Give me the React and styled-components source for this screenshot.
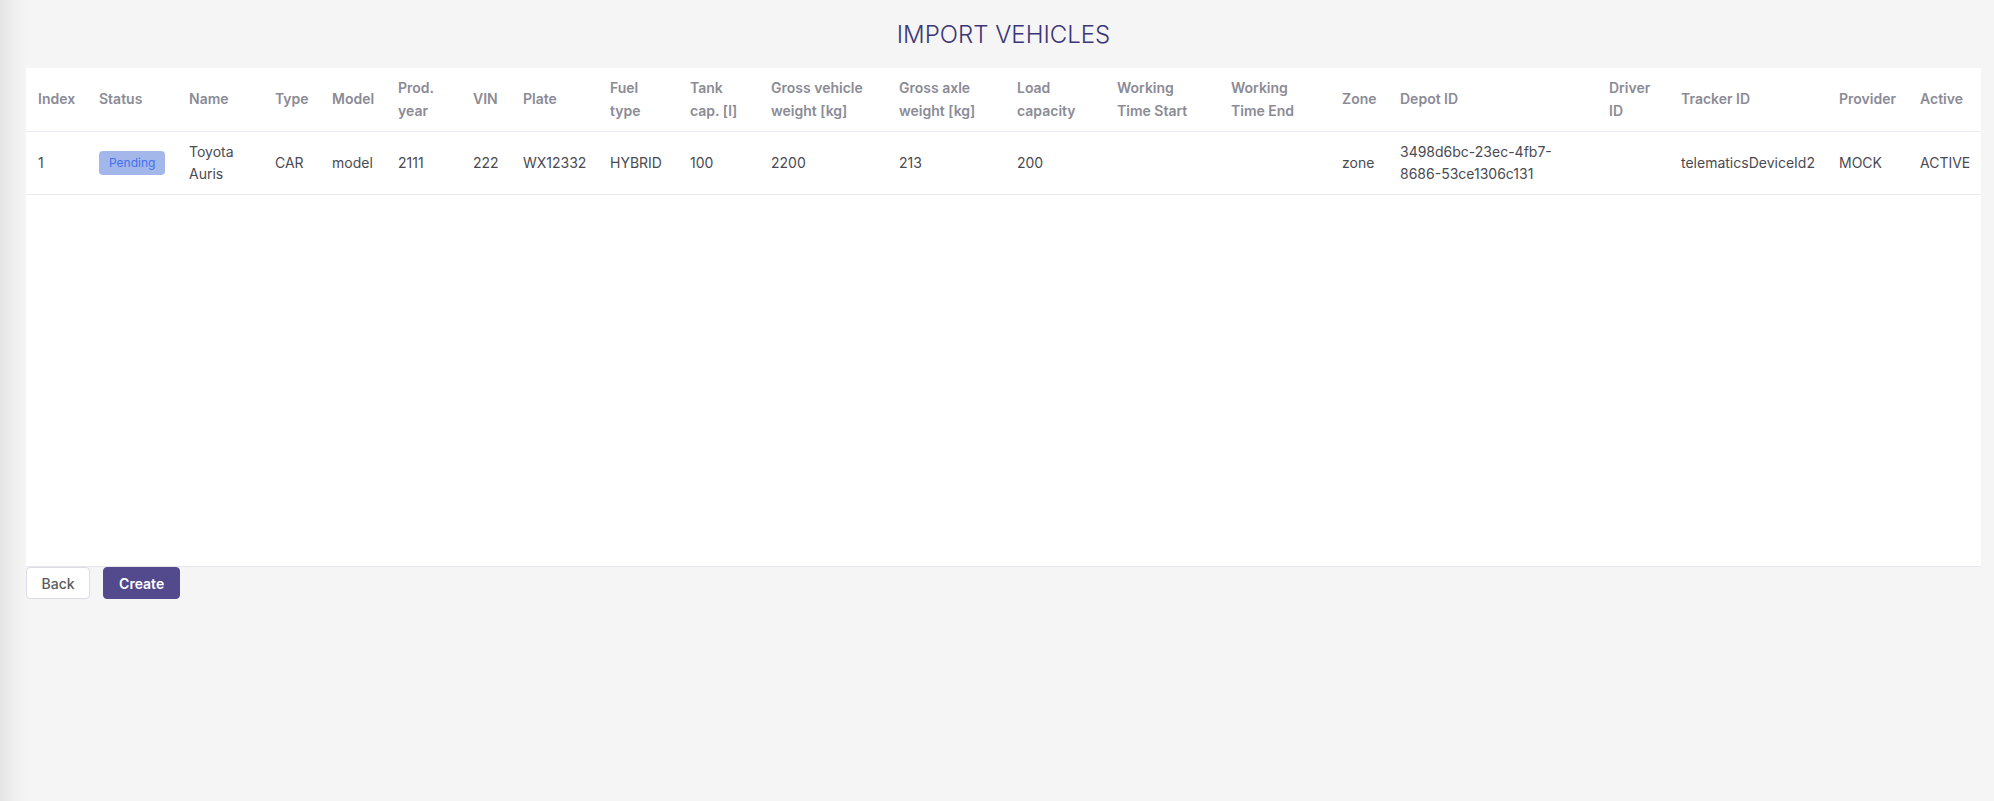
import React from 'react';
import styled, { createGlobalStyle } from 'styled-components';

const GlobalStyle = createGlobalStyle`
  html, body {
    margin: 0;
    padding: 0;
    background: #f5f5f5;
  }
  * {
    box-sizing: border-box;
  }
`;

const columns = [
  { key: 'index', title: 'Index', width: 61 },
  { key: 'status', title: 'Status', width: 90 },
  { key: 'name', title: 'Name', width: 86 },
  { key: 'type', title: 'Type', width: 57 },
  { key: 'model', title: 'Model', width: 66 },
  { key: 'prodYear', title: 'Prod. year', width: 75 },
  { key: 'vin', title: 'VIN', width: 50 },
  { key: 'plate', title: 'Plate', width: 87 },
  { key: 'fuelType', title: 'Fuel type', width: 80 },
  { key: 'tankCap', title: 'Tank cap. [l]', width: 81 },
  { key: 'grossVehicle', title: 'Gross vehicle weight [kg]', width: 128 },
  { key: 'grossAxle', title: 'Gross axle weight [kg]', width: 118 },
  { key: 'loadCapacity', title: 'Load capacity', width: 100 },
  { key: 'wtStart', title: 'Working Time Start', width: 114 },
  { key: 'wtEnd', title: 'Working Time End', width: 111 },
  { key: 'zone', title: 'Zone', width: 58 },
  { key: 'depotId', title: 'Depot ID', width: 209 },
  { key: 'driverId', title: 'Driver ID', width: 72 },
  { key: 'trackerId', title: 'Tracker ID', width: 158 },
  { key: 'provider', title: 'Provider', width: 81 },
  { key: 'active', title: 'Active', width: 73 },
];

const vehicles = [
  {
    index: 1,
    status: 'Pending',
    name: 'Toyota Auris',
    type: 'CAR',
    model: 'model',
    prodYear: '2111',
    vin: '222',
    plate: 'WX12332',
    fuelType: 'HYBRID',
    tankCap: '100',
    grossVehicle: '2200',
    grossAxle: '213',
    loadCapacity: '200',
    wtStart: '',
    wtEnd: '',
    zone: 'zone',
    depotId: '3498d6bc-23ec-4fb7-8686-53ce1306c131',
    driverId: '',
    trackerId: 'telematicsDeviceId2',
    provider: 'MOCK',
    active: 'ACTIVE',
  },
];

const App = () => {
  return (
    <Page>
      <GlobalStyle />
      <Title>IMPORT VEHICLES</Title>
      <Panel>
        <Table>
          <colgroup>
            {columns.map(col => (
              <col key={col.key} style={{ width: col.width }} />
            ))}
          </colgroup>
          <thead>
            <tr>
              {columns.map(col => (
                <HeadCell key={col.key}>{col.title}</HeadCell>
              ))}
            </tr>
          </thead>
          <tbody>
            {vehicles.map(vehicle => (
              <Row key={vehicle.index}>
                {columns.map(col => (
                  <Cell key={col.key}>
                    {col.key === 'status' ? (
                      <StatusBadge>{vehicle.status}</StatusBadge>
                    ) : (
                      vehicle[col.key]
                    )}
                  </Cell>
                ))}
              </Row>
            ))}
          </tbody>
        </Table>
      </Panel>
      <Actions>
        <Button>Back</Button>
        <Button primary>Create</Button>
      </Actions>
    </Page>
  );
};

export default App;

const Page = styled.div`
  min-height: 801px;
  padding: 0 13px 0 26px;
  font-family: Inter, 'Noto Sans', sans-serif;
  background: linear-gradient(to right, #e4e4e4 0, #efefef 14px, #f5f5f5 26px);
`;

const Title = styled.h1`
  margin: 0;
  height: 68px;
  display: flex;
  align-items: center;
  justify-content: center;
  padding-top: 1px;
  font-size: 24px;
  font-weight: 300;
  color: #3c3577;
`;

const Panel = styled.div`
  height: 499px;
  background: #fff;
  border-bottom: 1px solid #e6e6ee;
`;

const Table = styled.table`
  width: 100%;
  table-layout: fixed;
  border-collapse: collapse;
  font-size: 14px;
  line-height: 22.5px;
`;

const HeadCell = styled.th`
  padding: 9px 12px;
  text-align: left;
  vertical-align: middle;
  font-weight: 600;
  color: #8b8b96;
  border-bottom: 1px solid #ebebf2;
`;

const Row = styled.tr`
  border-bottom: 1px solid #ebebf2;
`;

const Cell = styled.td`
  padding: 8.5px 12px;
  vertical-align: middle;
  color: #4a4a52;
`;

const StatusBadge = styled.span`
  display: inline-flex;
  align-items: center;
  justify-content: center;
  height: 24px;
  padding: 0 10px;
  border-radius: 4px;
  font-size: 12px;
  background: #a3b7ea;
  color: #4471ee;
`;

const Actions = styled.div`
  display: flex;
  gap: 13px;
`;

const Button = styled.button`
  height: 32px;
  padding: 0 ${p => (p.primary ? '15px' : '14.5px')};
  border-radius: 4px;
  font-family: Inter, 'Noto Sans', sans-serif;
  font-size: 14px;
  font-weight: ${p => (p.primary ? 600 : 500)};
  cursor: pointer;
  border: 1px solid ${p => (p.primary ? '#524a8c' : '#dcdce6')};
  background: ${p => (p.primary ? '#524a8c' : '#fff')};
  color: ${p => (p.primary ? '#fff' : '#5a5a60')};
`;
